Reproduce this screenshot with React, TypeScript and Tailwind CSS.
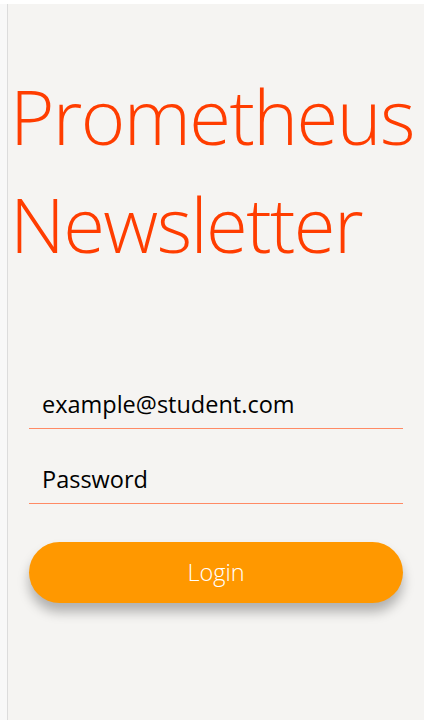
export default function App() {
  return (
    <div className="min-h-[720px] w-[424px] bg-white pt-[4px]">
      <div className="flex min-h-[716px]">
        <div className="w-[7px] shrink-0 border-r border-[#dcdcdc] bg-[#f8f8f8] box-content" />
        <div className="flex-1 bg-[#f5f4f2] px-[2px]" style={{ fontFamily: '"Open Sans", "Noto Sans", sans-serif' }}>
          <h1 className="mt-[58px] text-[76px] font-light leading-[108px] tracking-[-1.6px] text-[#ff3d00]">
            Prometheus
            <br />
            Newsletter
          </h1>
          <div className="mx-[19px] mt-[104px] flex flex-col">
            <div className="flex flex-col">
              <div className="flex h-[46px] items-end pb-[9px] pl-[13px] text-[23.5px] leading-[30px] text-black">
                example@student.com
              </div>
              <div className="h-px bg-[#ff8a65]" />
            </div>
            <div className="mt-[28px] flex flex-col">
              <div className="flex h-[46px] items-end pb-[9px] pl-[13px] text-[23.5px] leading-[30px] text-black">
                Password
              </div>
              <div className="h-px bg-[#ff8a65]" />
            </div>
            <button className="mt-[38px] flex h-[61px] items-center justify-center rounded-full bg-[#ff9800] text-[23.5px] font-light text-white shadow-[0_9px_12px_rgba(0,0,0,0.28)]">
              Login
            </button>
          </div>
        </div>
      </div>
    </div>
  );
}
